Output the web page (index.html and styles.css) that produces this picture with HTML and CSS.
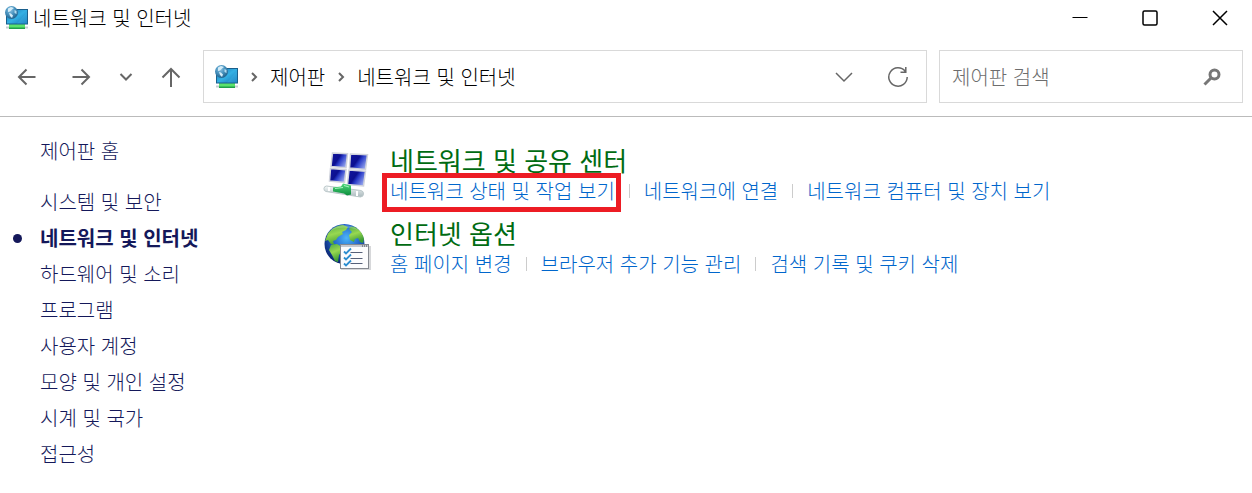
FILE: index.html
```
<!DOCTYPE html>
<html lang="ko">
<head>
    <meta charset="UTF-8">
    <meta name="viewport" content="width=device-width, initial-scale=1">
    <title>네트워크 및 인터넷</title>
    <link rel="stylesheet" href="styles.css">
</head>
<body>
    <!-- shared icon -->
    <svg class="defs" aria-hidden="true">
        <defs>
            <linearGradient id="screen" x1="0" y1="0" x2="1" y2="1">
                <stop offset="0" stop-color="#1b78b4"/>
                <stop offset="0.5" stop-color="#35b0e4"/>
                <stop offset="1" stop-color="#1578b8"/>
            </linearGradient>
            <radialGradient id="miniGlobe" cx="0.4" cy="0.3" r="0.75">
                <stop offset="0" stop-color="#8cc4e4"/>
                <stop offset="0.5" stop-color="#4690bc"/>
                <stop offset="1" stop-color="#1d5c86"/>
            </radialGradient>
            <symbol id="net" viewBox="0 0 24 24">
                <path d="M1 21.5h22" stroke="#c4cdd2" stroke-width="2"/>
                <rect x="4" y="18" width="16" height="5" fill="#5be36c"/>
                <rect x="4" y="21.5" width="16" height="1.5" fill="#1fa04a"/>
                <rect x="1" y="3" width="22" height="15.5" fill="#1a5f8c"/>
                <rect x="2" y="4" width="20" height="13.5" fill="url(#screen)"/>
                <path d="M12 17.5L22 6v11.5z" fill="#45b6e8" opacity="0.3"/>
                <circle cx="6.5" cy="6.5" r="6.5" fill="url(#miniGlobe)"/>
                <path d="M3 2.500l3-1.500 3 1-2 1.500-2 2-2 .5zM4 7l2 .5 2 2-1 2.500-2-2z" fill="#d4ecf8"/>
                <path d="M9.500 4l2 1v3l-2-1z" fill="#b4dcf0"/>
            </symbol>
        </defs>
    </svg>

    <header class="titlebar">
        <svg class="app-icon"><use href="#net"/></svg>
        <span class="window-title">네트워크 및 인터넷</span>
        <div class="window-buttons">
            <button type="button" aria-label="최소화"><svg width="16" height="16" viewBox="0 0 16 16"><path d="M0.5 7.5h15" stroke-width="1"/></svg></button>
            <button type="button" aria-label="최대화"><svg width="16" height="16" viewBox="0 0 16 16"><rect x="1" y="1" width="14" height="14" rx="1.5"/></svg></button>
            <button type="button" aria-label="닫기"><svg width="16" height="16" viewBox="0 0 16 16"><path d="M1 1l14 14M15 1L1 15"/></svg></button>
        </div>
    </header>

    <div class="toolbar">
        <div class="nav-buttons">
            <button type="button" aria-label="뒤로"><svg width="20" height="20" viewBox="0 0 20 20"><path d="M18.5 10H2M9.500 2.500L2 10l7.500 7.500"/></svg></button>
            <button type="button" aria-label="앞으로"><svg width="20" height="20" viewBox="0 0 20 20"><path d="M1.5 10H18M10.500 2.500L18 10l-7.500 7.500"/></svg></button>
            <button type="button" class="recent" aria-label="최근 위치"><svg width="14" height="10" viewBox="0 0 14 10"><path d="M1.5 2L7 7.500 12.500 2"/></svg></button>
            <button type="button" aria-label="위로"><svg width="20" height="22" viewBox="0 0 20 22"><path d="M10 21V3M1.500 11.500L10 3l8.500 8.500"/></svg></button>
        </div>
        <div class="address">
            <svg class="app-icon"><use href="#net"/></svg>
            <nav class="crumbs" aria-label="경로">
                <svg width="8" height="12" viewBox="0 0 8 12"><path d="M2 2l4 4-4 4"/></svg>
                <a href="#">제어판</a>
                <svg width="8" height="12" viewBox="0 0 8 12"><path d="M2 2l4 4-4 4"/></svg>
                <a href="#">네트워크 및 인터넷</a>
            </nav>
            <button type="button" aria-label="이전 위치"><svg width="18" height="12" viewBox="0 0 18 12"><path d="M1 2l8 8 8-8"/></svg></button>
            <button type="button" aria-label="새로 고침"><svg width="22" height="22" viewBox="0 0 22 22"><path d="M18.200 5.300A9.200 9.200 0 1 0 20.200 11M18.800 1v5.200h-5.300"/></svg></button>
        </div>
        <form class="search">
            <input type="search" aria-label="제어판 검색" placeholder="제어판 검색">
            <button type="submit" aria-label="검색"><svg width="18" height="18" viewBox="0 0 18 18"><circle cx="11.500" cy="6.500" r="4.500" stroke-width="3"/><path d="M8 10l-6.500 6.500" stroke-width="3"/></svg></button>
        </form>
    </div>

    <div class="content">
        <aside class="sidebar">
            <a class="home" href="#">제어판 홈</a>
            <ul>
                <li><a href="#">시스템 및 보안</a></li>
                <li class="active"><a href="#">네트워크 및 인터넷</a></li>
                <li><a href="#">하드웨어 및 소리</a></li>
                <li><a href="#">프로그램</a></li>
                <li><a href="#">사용자 계정</a></li>
                <li><a href="#">모양 및 개인 설정</a></li>
                <li><a href="#">시계 및 국가</a></li>
                <li><a href="#">접근성</a></li>
            </ul>
        </aside>

        <main>
            <section class="category">
                <svg class="category-icon" viewBox="0 0 48 48" aria-hidden="true">
                    <defs>
                        <linearGradient id="blue" x1="0" y1="0.2" x2="1" y2="0.8">
                            <stop offset="0" stop-color="#10149c"/>
                            <stop offset="0.4" stop-color="#0c1090"/>
                            <stop offset="0.55" stop-color="#2a3cc8"/>
                            <stop offset="1" stop-color="#a8b8f4"/>
                        </linearGradient>
                        <linearGradient id="pipe" x1="0" y1="0" x2="0" y2="1">
                            <stop offset="0" stop-color="#f4f8f8"/>
                            <stop offset="1" stop-color="#a9b8bc"/>
                        </linearGradient>
                        <linearGradient id="plug" x1="0" y1="0" x2="0" y2="1">
                            <stop offset="0" stop-color="#4fd87c"/>
                            <stop offset="1" stop-color="#0c8c3c"/>
                        </linearGradient>
                    </defs>
                    <g stroke="#d0d3dc" stroke-width="1.5" fill="url(#blue)">
                        <path d="M9.500 2l15 .8-1.500 14-15-1.300z"/>
                        <path d="M27.500 3l17 .7-2 14.800-16-1.400z"/>
                        <path d="M7.500 17.500l15.500 1.200-1.500 12.800-15-1.500z"/>
                        <path d="M26 19l16.500 1.300-2 14.700-16-1.500z"/>
                    </g>
                    <path d="M3.500 35L38 39.500a3.300 3.300 0 0 1-.5 6.500L3 40.500a2.800 2.800 0 0 1 .5-5.500z" fill="url(#pipe)" stroke="#bcc8ca"/>
                    <path d="M10 36.500l8-1 2-3 8 2v9l-4 1-3-2-11-2z" fill="url(#plug)"/>
                    <path d="M12 37.500l8-1M21 34.500l5 1.500" stroke="#a4f4bc"/>
                    <path d="M6 36v4M34 40v5" stroke="#fff" stroke-width="2"/>
                </svg>
                <div class="category-body">
                    <h2><a href="#">네트워크 및 공유 센터</a></h2>
                    <ul class="tasks">
                        <li class="marked"><a href="#">네트워크 상태 및 작업 보기</a></li>
                        <li><a href="#">네트워크에 연결</a></li>
                        <li><a href="#">네트워크 컴퓨터 및 장치 보기</a></li>
                    </ul>
                </div>
            </section>

            <section class="category">
                <svg class="category-icon" viewBox="0 0 48 48" aria-hidden="true">
                    <defs>
                        <radialGradient id="ocean" cx="0.55" cy="0.35" r="0.65">
                            <stop offset="0" stop-color="#4cb4f8"/>
                            <stop offset="0.5" stop-color="#2468cc"/>
                            <stop offset="1" stop-color="#0a2470"/>
                        </radialGradient>
                        <linearGradient id="land" x1="0" y1="0" x2="0.3" y2="1">
                            <stop offset="0" stop-color="#4ca848"/>
                            <stop offset="0.5" stop-color="#98d850"/>
                            <stop offset="1" stop-color="#3c9c34"/>
                        </linearGradient>
                    </defs>
                    <circle cx="21.5" cy="20" r="20" fill="url(#ocean)"/>
                    <path d="M5 9.500C9 4 14 1.500 20 1l5 2-2 3-4 2 1 2-5 3-2 3-3 1 1 3 3 1-1 1-5-2-3-4-3 1z" fill="url(#land)"/>
                    <path d="M8 21l6-1 5 3v4l-3 4-1 7-3-1-3-6-3-5z" fill="url(#land)"/>
                    <path d="M28 2.500l4 .5c5 3 8 7 9 12l-1 4-3-1-2-4-3 1-1 3-4-2-1-5 3-3-3-3z" fill="url(#land)"/>
                    <path d="M7 7C13 0 28-1 35 6c-8-3-20-4-28 1z" fill="#fff" opacity="0.2"/>
                    <path d="M18 22h30v24H18z" fill="#8b8f96" opacity="0.35"/>
                    <rect x="17.5" y="20.5" width="28" height="24" fill="#fcfcfd" stroke="#85888f"/>
                    <path d="M18 22h27" stroke="#c6c9d0" stroke-width="2"/>
                    <path d="M39 22h1M41 22h1M43 22h1" stroke="#41454e"/>
                    <path d="M27.500 28.500h12M27.500 34.500h12M27.500 39.500h12" stroke="#566078"/>
                    <path d="M21 27.500l2 2 5-5M21 33.500l2 2 5-5M21 39.500l2 2 5-5" stroke="#2d8ed0" stroke-width="1.8" fill="none"/>
                </svg>
                <div class="category-body">
                    <h2><a href="#">인터넷 옵션</a></h2>
                    <ul class="tasks">
                        <li><a href="#">홈 페이지 변경</a></li>
                        <li><a href="#">브라우저 추가 기능 관리</a></li>
                        <li><a href="#">검색 기록 및 쿠키 삭제</a></li>
                    </ul>
                </div>
            </section>
        </main>
    </div>
</body>
</html>
```
FILE: styles.css
```
* {
    box-sizing: border-box;
}
body {
    margin: 0;
    background: #fff;
    color: #000;
    font-family: "Noto Sans CJK KR", sans-serif;
    font-size: 20px;
    font-weight: 300;
    line-height: 30px;
}
a {
    color: inherit;
    text-decoration: none;
}
a:hover {
    text-decoration: underline;
}
ul {
    list-style: none;
    margin: 0;
    padding: 0;
}
button {
    display: flex;
    align-items: center;
    justify-content: center;
    padding: 0;
    border: none;
    background: none;
}
svg {
    flex: none;
    fill: none;
}
button svg {
    stroke: #666;
    stroke-width: 2;
}
.defs {
    position: absolute;
    width: 0;
    height: 0;
}
.app-icon {
    width: 24px;
    height: 24px;
}

/* title bar */
.titlebar {
    display: flex;
    align-items: center;
    height: 36px;
    padding-left: 5px;
}
.window-title {
    margin-left: 4px;
}
.window-buttons {
    display: flex;
    gap: 6px;
    margin-left: auto;
}
.window-buttons button {
    width: 64px;
    height: 36px;
}
.window-buttons svg {
    stroke: #000;
    stroke-width: 1.5;
}

/* toolbar */
.toolbar {
    display: flex;
    padding: 14px 9px 13px 0;
    border-bottom: 1px solid #bbb;
}
.nav-buttons {
    display: flex;
    width: 203px;
}
.nav-buttons button {
    width: 54px;
}
.nav-buttons .recent {
    width: 36px;
}
.address,
.search {
    display: flex;
    height: 53px;
    border: 1px solid #d9d9d9;
}
.address {
    flex: 1;
    align-items: center;
    padding: 0 1px 0 11px;
}
.address button {
    width: 54px;
    height: 100%;
}
.address button svg {
    stroke-width: 1.5;
}
.crumbs {
    display: flex;
    flex: 1;
    align-items: center;
    gap: 12px;
    padding-left: 11px;
}
.crumbs svg {
    stroke: #666;
    stroke-width: 2;
}
.search {
    width: 304px;
    margin-left: 12px;
}
.search input {
    flex: 1;
    min-width: 0;
    padding: 0 0 0 12px;
    border: none;
    outline: none;
    background: none;
    font: inherit;
}
.search input::placeholder {
    color: #6d6d6d;
}
.search button {
    width: 60px;
}
.search button svg {
    stroke: #777;
}

/* content */
.content {
    display: flex;
}
.sidebar {
    width: 323px;
    padding: 16px 0 0 40px;
    color: #14185a;
    line-height: 36px;
}
.sidebar .home {
    display: block;
    margin-bottom: 15px;
}
.sidebar .active {
    position: relative;
    font-weight: 700;
}
.sidebar .active::before {
    content: "";
    position: absolute;
    top: 14px;
    left: -27px;
    width: 9px;
    height: 9px;
    border-radius: 50%;
    background: #14185a;
}
main {
    flex: 1;
    padding-top: 26px;
}
.category {
    display: flex;
    gap: 19px;
    margin-bottom: 10px;
}
.category-icon {
    width: 48px;
    height: 48px;
    margin-top: 8px;
}
.category h2 {
    margin: 0;
    color: #006b12;
    font-size: 26px;
    font-weight: 400;
    line-height: 33px;
}
.tasks {
    display: flex;
    color: #0066cc;
}
.tasks li {
    display: flex;
    align-items: center;
    position: relative;
}
.tasks li + li::before {
    content: "";
    width: 1px;
    height: 14px;
    margin: 0 14px;
    background: #ccc;
}
.tasks .marked::after {
    content: "";
    position: absolute;
    top: -3px;
    right: -6px;
    bottom: -6px;
    left: -8px;
    border: 5px solid #ed1c24;
    pointer-events: none;
}
```
